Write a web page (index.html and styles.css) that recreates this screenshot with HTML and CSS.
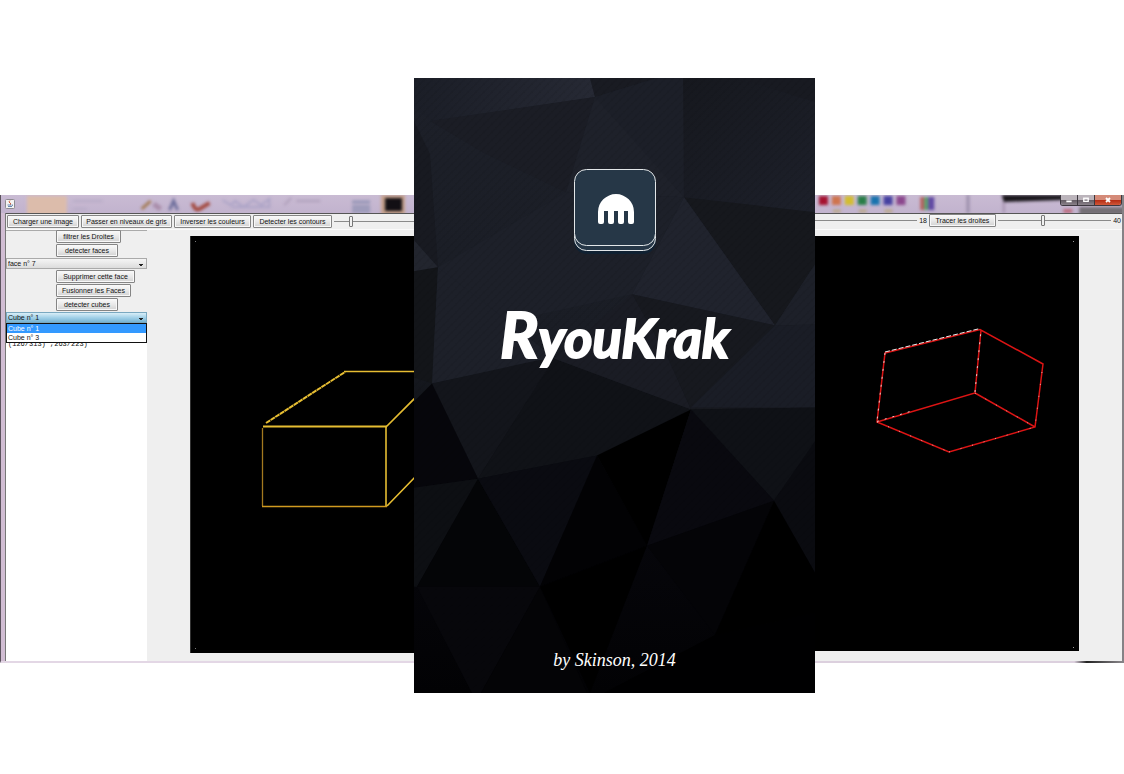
FILE: index.html
```html
<!DOCTYPE html>
<html lang="fr">
<head>
<meta charset="utf-8">
<title>RyouKrak</title>
<link rel="stylesheet" href="styles.css">
</head>
<body>
<main class="stage">
  <section class="window window-left">
    <header class="titlebar">
      <svg class="glass" viewBox="0 0 414 18" preserveAspectRatio="none" aria-hidden="true">
        <g class="soft">
          <rect x="26" y="1" width="40" height="20" fill="#dcbcab"/>
          <path d="M72 6h30M72 14h14" stroke="#b7abc6" stroke-width="2"/>
          <path d="M141 14l9-8" stroke="#a1784e" stroke-width="3"/>
          <path d="M153 9l7 5" stroke="#a98daa" stroke-width="5"/>
          <path d="M169 15l4-9 4 9" stroke="#6d6e9b" stroke-width="3" fill="none"/>
          <path d="M192 8q2 8 7 6l10-6" stroke="#a3493f" stroke-width="4" fill="none"/>
          <path d="M222 5l8 5 5-4 8 6 10-7 8 5 8-6v8h-38" stroke="#aba3c6" stroke-width="2" fill="none"/>
          <path d="M284 10l7-7M296 6h24" stroke="#af9fba" stroke-width="2"/>
          <path d="M352 7h18M352 12h18M352 16h18" stroke="#9293b4" stroke-width="3"/>
          <rect x="381" y="0" width="24" height="20" fill="#c6a18b"/>
          <rect x="385" y="3" width="17" height="13" fill="#120f14"/>
        </g>
      </svg>
      <svg class="java" viewBox="0 0 10 10" aria-hidden="true">
        <rect x=".5" y=".5" width="9" height="9" rx="1" fill="#f4f3f2" stroke="#8d8a90"/>
        <path d="M5 1.500q-2 1.500 0 2.500t0 1.500" fill="none" stroke="#cf5a35"/>
        <path d="M2.500 6h4M3 7.500h4M7 5.500q1.500.5 0 1.500" fill="none" stroke="#426ba0" stroke-width=".8"/>
      </svg>
    </header>
    <div class="toolbar">
      <button class="btn w-72">Charger une image</button>
      <button class="btn w-91">Passer en niveaux de gris</button>
      <button class="btn w-77">Inverser les couleurs</button>
      <button class="btn w-79">Detecter les contours</button>
      <input class="slider slider-seuil" type="range" min="0" max="100" value="20" aria-label="Seuil des contours">
    </div>
    <div class="work">
      <aside class="side">
        <div class="controls">
          <button class="btn side-btn w-65">filtrer les Droites</button>
          <button class="btn side-btn w-62">detecter faces</button>
          <select class="combo" aria-label="Face"><option>face n° 7</option></select>
          <button class="btn side-btn w-79">Supprimer cette face</button>
          <button class="btn side-btn w-75">Fusionner les Faces</button>
          <button class="btn side-btn w-62">detecter cubes</button>
          <div class="combo-wrap">
            <select class="combo combo-open" aria-label="Cube"><option>Cube n° 1</option><option>Cube n° 3</option></select>
            <ul class="menu">
              <li class="menu-item chosen">Cube n° 1</li>
              <li class="menu-item">Cube n° 3</li>
            </ul>
          </div>
        </div>
        <div class="log">(126/313) ,263/223)</div>
      </aside>
      <div class="canvas canvas-left">
        <svg class="drawing" viewBox="0 0 224 417" preserveAspectRatio="xMinYMin slice" role="img" aria-label="Cube jaune">
          <g fill="none" stroke="#e6bd32" stroke-width="1.300">
            <path d="M75 187L154 136" stroke-width="2" stroke-dasharray="5 .5"/>
            <path d="M153 135.500H230"/>
            <path d="M72 190.500H196" stroke-width="1.800"/>
            <path d="M71.500 192V270" stroke="#a3791f"/>
            <path d="M71 270.500H196" stroke="#d09a20"/>
            <path d="M195 191V270" stroke-width="1.600"/>
            <path d="M195 191L229 157M196 270L229 236" stroke-width="1.600"/>
          </g>
          <path d="M4 5h1v1h-1zM4 412h1v1h-1z" fill="#777"/>
        </svg>
      </div>
    </div>
  </section>

  <section class="poster">
    <svg class="facets" viewBox="0 0 401 614" preserveAspectRatio="none" aria-hidden="true">
      <defs>
        <linearGradient id="night" x1="0" y1="0" x2="0" y2="1">
          <stop offset="0" stop-color="#1d2029"/>
          <stop offset=".42" stop-color="#1a1d25"/>
          <stop offset=".56" stop-color="#101217"/>
          <stop offset=".75" stop-color="#06060b"/>
          <stop offset="1" stop-color="#020204"/>
        </linearGradient>
        <linearGradient id="edge" x1="0" y1="0" x2="1" y2="0">
          <stop offset="0" stop-color="#1b1e27"/>
          <stop offset="1" stop-color="#262934"/>
        </linearGradient>
        <linearGradient id="fold" x1="0" y1="0" x2="1" y2="1">
          <stop offset="0" stop-color="#16181e"/>
          <stop offset="1" stop-color="#1d202a"/>
        </linearGradient>
        <pattern id="weave" width="8" height="8" patternUnits="userSpaceOnUse">
          <path d="M0 4L4 0M4 8L8 4M1 1L3 3M5 5L7 7" stroke="#000" stroke-width="1" opacity=".08"/>
        </pattern>
      </defs>
      <rect width="401" height="614" fill="url(#night)"/>
      <path d="M0 0H176L181 19L16 43L0 30Z" fill="url(#edge)"/>
      <path d="M176 0H243L181 19Z" fill="#191b22"/>
      <path d="M16 43L181 19L152 114L70 75Z" fill="#1b1d25"/>
      <path d="M181 19L243 0H269L270 119L205 48Z" fill="#1c1f28"/>
      <path d="M181 19L270 119L152 114Z" fill="#1e212a"/>
      <path d="M269 0H321L401 24V134L270 119Z" fill="url(#fold)"/>
      <path d="M321 0H401V24Z" fill="#181a21"/>
      <path d="M270 119L401 134V186L361 247Z" fill="#16181d"/>
      <path d="M270 119L361 247L218 216Z" fill="#20232d"/>
      <path d="M152 114L270 119L218 216L85 245L24 189Z" fill="#1d2029"/>
      <path d="M0 43L16 76L24 189L0 162Z" fill="#181a21"/>
      <path d="M0 162L24 189L0 193Z" fill="#22252e"/>
      <path d="M0 193L24 189L18 305L0 299Z" fill="#131519"/>
      <path d="M24 189L110 255L140 280L18 305Z" fill="#1d2029"/>
      <path d="M218 216L361 247L401 246V329L277 331L254 280Z" fill="#17191f"/>
      <path d="M361 247L401 246V329H277Z" fill="#1a1d26"/>
      <path d="M401 186V246L361 247Z" fill="#1d2029"/>
      <path d="M18 305L123 282L140 280L64 400Z" fill="#13151b"/>
      <path d="M140 280L226 312L277 331L183 377L64 400Z" fill="#101217"/>
      <path d="M140 280L218 216L254 280L277 331Z" fill="#1a1c24"/>
      <path d="M0 323L18 305L64 400L0 409Z" fill="#06060b"/>
      <path d="M0 409L64 400L3 508H0Z" fill="#0d0f13"/>
      <path d="M64 400L126 508H3Z" fill="#040507"/>
      <path d="M64 400L183 377L126 508Z" fill="#0a0b11"/>
      <path d="M183 377L233 467L126 508Z" fill="#020204"/>
      <path d="M277 331L233 467L183 377Z" fill="#000"/>
      <path d="M277 331L401 329V363L360 422Z" fill="#0f1116"/>
      <path d="M277 331L360 422L233 467Z" fill="#09090f"/>
      <path d="M401 363V494L360 422Z" fill="#0a0b10"/>
      <path d="M360 422L301 556L233 467Z" fill="#040407"/>
      <path d="M360 422L401 494V534L301 556Z" fill="#000"/>
      <path d="M3 508H126L67 614H58Z" fill="#07070b"/>
      <path d="M126 508L173 614H67Z" fill="#040406"/>
      <path d="M126 508L233 467L176 614Z" fill="#000"/>
      <path d="M301 556L401 534V614H190Z" fill="#000001"/>
      <rect width="401" height="614" fill="url(#weave)"/>
    </svg>
    <div class="cover">
      <svg class="logo" viewBox="0 0 84 88" role="img" aria-label="Kraken">
        <rect x="1" y="8" width="82" height="78" rx="13" fill="#102132"/>
        <rect x="1.500" y="7" width="81" height="75.500" rx="12" fill="#263747" stroke="#e2e6e8"/>
        <rect x="1.500" y="1.500" width="81" height="76" rx="12" fill="#263747" stroke="#e2e6e8"/>
        <path d="M25 44a18 18 0 0 1 36 0v10q0 2-2 2h-2q-2 0-2-2V43h-4v11q0 2-2 2h-2q-2 0-2-2V43h-4v11q0 2-2 2h-2q-2 0-2-2V43h-4v11q0 2-2 2h-2q-2 0-2-2z" fill="#fff"/>
      </svg>
      <h1 class="wordmark">RyouKrak</h1>
      <p class="credit">by Skinson, 2014</p>
    </div>
  </section>

  <section class="window window-right">
    <header class="titlebar">
      <svg class="glass" viewBox="0 0 309 18" preserveAspectRatio="none" aria-hidden="true">
        <g class="soft">
          <rect x="4" y="1" width="9" height="9" fill="#a51230"/>
          <rect x="17" y="1" width="9" height="9" fill="#cf744e"/>
          <rect x="30" y="1" width="9" height="9" fill="#d3bd30"/>
          <rect x="43" y="1" width="9" height="9" fill="#277d47"/>
          <rect x="56" y="1" width="9" height="9" fill="#1973ae"/>
          <rect x="69" y="1" width="9" height="9" fill="#4540a1"/>
          <rect x="82" y="1" width="9" height="9" fill="#8b478d"/>
          <path d="M18 16h8M44 16h8M70 16h8" stroke="#b9a884" stroke-width="3"/>
          <rect x="106" y="2" width="4" height="13" fill="#b65d5a"/>
          <rect x="110" y="2" width="4" height="13" fill="#58a06a"/>
          <rect x="114" y="2" width="6" height="13" fill="#6048a3"/>
          <path d="M154 0v18" stroke="#9a8ea9" stroke-width="3"/>
          <path d="M188 0h62v5l-60 2z" fill="#19161b"/>
          <path d="M190 7v11" stroke="#a38fac" stroke-width="2"/>
          <rect x="266" y="12" width="50" height="8" fill="#746f75"/>
          <rect x="250" y="14" width="9" height="4" fill="#bd6c7f"/>
        </g>
      </svg>
      <div class="sysbuttons">
        <button class="sys" aria-label="Réduire"><svg viewBox="0 0 18 10"><path d="M6 6.500h6" stroke="#fff" stroke-width="2"/></svg></button>
        <button class="sys" aria-label="Agrandir"><svg viewBox="0 0 18 10"><rect x="6.500" y="3" width="5" height="3.500" fill="none" stroke="#fff" stroke-width="1.500"/></svg></button>
        <button class="sys sys-close" aria-label="Fermer"><svg viewBox="0 0 18 10"><path d="M7 3l4 4M11 3L7 7" stroke="#fff" stroke-width="1.800"/></svg></button>
      </div>
    </header>
    <div class="toolbar toolbar-right">
      <span class="rail"></span>
      <span class="num">18</span>
      <button class="btn w-67">Tracer les droites</button>
      <input class="slider slider-droites" type="range" min="0" max="100" value="39" aria-label="Droites">
      <span class="num">40</span>
    </div>
    <div class="work">
      <div class="canvas canvas-right">
        <svg class="drawing" viewBox="0 0 264 415" preserveAspectRatio="xMaxYMin slice" role="img" aria-label="Cube rouge">
          <g fill="none" stroke-width="1.500">
            <path d="M70 117L165 93.500L228 128L220 191L134 216L62 186ZM166 94L160 157L62 186M160 157L220 191" stroke="#dc1414"/>
            <path d="M70 116L165 92.500" stroke="#eee" stroke-width="1" stroke-dasharray="5 2"/>
            <path d="M70 117L62 185M160 156L166 94M62 185.500L100 174" stroke="#e8c8c8" stroke-width="1" stroke-dasharray="2 6"/>
            <path d="M134 216L220 191L228 128M160 157L220 191M62 186L134 216" stroke="#e8a0a0" stroke-width="1" stroke-dasharray="1 11"/>
          </g>
          <path d="M258 5h1v1h-1zM258 411h1v1h-1z" fill="#999"/>
        </svg>
      </div>
    </div>
  </section>
</main>
</body>
</html>
```
FILE: styles.css
```css
* { box-sizing: border-box; }

body {
  margin: 0;
  background: #fff;
  color: #111;
  font-family: "Liberation Sans", Arial, sans-serif;
  font-size: 7px;
  line-height: 9px;
}

button, input, select {
  margin: 0;
  font: inherit;
  color: inherit;
}

.stage {
  display: grid;
  grid-template-columns: 414fr 401fr 309fr;
  align-items: start;
  padding: 78px 0;
}

.window {
  display: flex;
  flex-direction: column;
  min-width: 0;
  margin-top: 117px;
  min-height: 468px;
  background: #efefef;
  overflow: hidden;
}
.window-left {
  border-left: 1px solid #5b535d;
  border-bottom: 2px solid #e3d7e5;
  box-shadow: inset 4px 0 #d1bdd3, inset 5px 0 #777;
  padding-left: 5px;
}
.window-right {
  border-right: 2px solid #858286;
  border-bottom: 2px solid;
  border-image: linear-gradient(90deg, #dcd0de 84%, #222 88%, #858286 99%) 2;
}

.titlebar {
  position: relative;
  height: 18px;
  background: linear-gradient(#c9bbd3, #c2b3ce);
}
.window-left .titlebar { margin-left: -5px; }
.glass {
  display: block;
  width: 100%;
  height: 18px;
}
.soft { filter: blur(1.500px); }
.java {
  position: absolute;
  left: 4px;
  top: 4px;
  width: 10px;
  height: 10px;
}
.sysbuttons {
  position: absolute;
  top: 0;
  right: 0;
  display: flex;
  border: 1px solid #3d383f;
  border-top: 0;
  border-radius: 0 0 3px 3px;
  overflow: hidden;
}
.sys {
  width: 17px;
  height: 10px;
  padding: 0;
  border: 0;
  border-right: 1px solid #3d383f;
  background: linear-gradient(#bbb4bb 45%, #625a62 50%, #8a828a);
}
.sys svg { display: block; width: 100%; height: 10px; }
.sys-close {
  width: 26px;
  border-right: 0;
  background: linear-gradient(#d48a78 45%, #b52a12 50%, #d0583a);
}

.toolbar {
  display: flex;
  align-items: flex-start;
  gap: 2px;
  height: 17px;
  padding: 1px 0 0 1px;
  border-top: 1px solid #555;
  border-bottom: 1px solid #fafafa;
}
.toolbar-right {
  align-items: center;
  gap: 2px;
  padding: 0 1px 2px 0;
}

.btn {
  flex: none;
  height: 13px;
  padding: 0;
  border: 1px solid #858585;
  border-radius: 1px;
  background: linear-gradient(#fafafa, #e9e9e9 50%, #d2d2d2);
  box-shadow: inset 0 0 0 1px #f8f8f8;
  text-align: center;
  white-space: nowrap;
  line-height: 10px;
}
.w-62 { width: 62px; }
.w-65 { width: 65px; }
.w-67 { width: 67px; }
.w-72 { width: 72px; }
.w-75 { width: 75px; }
.w-77 { width: 77px; }
.w-79 { width: 79px; }
.w-91 { width: 91px; }

.slider {
  flex: 112;
  min-width: 0;
  height: 13px;
  appearance: none;
  background: linear-gradient(#8a8a8a, #8a8a8a) center / 100% 1px no-repeat;
}
.slider::-webkit-slider-thumb {
  appearance: none;
  width: 4px;
  height: 11px;
  border: 1px solid #777;
  border-radius: 1px;
  background: #f1f1f1;
}
.rail {
  flex: 101;
  height: 1px;
  background: #8a8a8a;
}

.work {
  display: flex;
  flex: 1;
}
.side {
  display: flex;
  flex: 0 0 141px;
  flex-direction: column;
  box-shadow: inset 0 1px #aaa;
}
.controls {
  display: flex;
  flex-direction: column;
  gap: 1px;
}
.side-btn { margin-left: 50px; }
.combo {
  display: block;
  width: 100%;
  height: 11px;
  padding: 0 1px;
  appearance: none;
  border: 1px solid #aaa;
  border-radius: 0;
  background:
    linear-gradient(#222, #222) right 3px top 5px / 4px 1px no-repeat,
    linear-gradient(#222, #222) right 4px top 6px / 2px 1px no-repeat,
    linear-gradient(#f5f5f5, #dcdcdc);
  line-height: 9px;
}
.combo-open {
  border-color: #7aa8c0;
  background:
    linear-gradient(#222, #222) right 3px top 5px / 4px 1px no-repeat,
    linear-gradient(#222, #222) right 4px top 6px / 2px 1px no-repeat,
    linear-gradient(#d9eef8, #a3d1e8 50%, #76b4d4);
}
.combo-wrap { position: relative; }
.menu {
  position: absolute;
  top: 100%;
  left: 0;
  right: 0;
  z-index: 1;
  margin: 0;
  padding: 0;
  list-style: none;
  border: 1px solid #111;
  background: #fff;
}
.menu-item {
  height: 9px;
  padding-left: 1px;
}
.chosen { background: #3399ff; color: #fff; }
.log {
  flex: 1;
  padding: 17px 2px 0;
  background: #fff;
  font-family: "Liberation Mono", monospace;
}

.canvas {
  flex: 1;
  min-width: 0;
  height: 417px;
  background: #000;
}
.canvas-left {
  margin: 6px 0 0 43px;
  border-left: 1px solid #333;
}
.canvas-right {
  height: 415px;
  margin: 6px 43px 0 0;
}
.drawing {
  display: block;
  width: 100%;
  height: 100%;
}

.poster {
  position: relative;
  display: flex;
  min-height: 615px;
  background: #090a0e;
  color: #fff;
  overflow: hidden;
}
.facets {
  position: absolute;
  inset: 0;
  width: 100%;
  height: 100%;
}
.cover {
  position: relative;
  display: flex;
  flex: 1;
  flex-direction: column;
  align-items: center;
  padding: 90px 0 22px;
}
.logo {
  width: 84px;
  height: 88px;
}
.wordmark {
  margin: 46px 0 0;
  font-family: Lato, "Liberation Sans", sans-serif;
  font-size: 54px;
  font-style: italic;
  font-weight: 700;
  line-height: 64px;
  -webkit-text-stroke: 2px #fff;
  stroke-linejoin: round;
}
.wordmark::first-letter { font-size: 64px; }
.credit {
  margin: auto 0 0;
  font-family: "Liberation Serif", "Times New Roman", serif;
  font-size: 18px;
  font-style: italic;
  line-height: 22px;
}
```
